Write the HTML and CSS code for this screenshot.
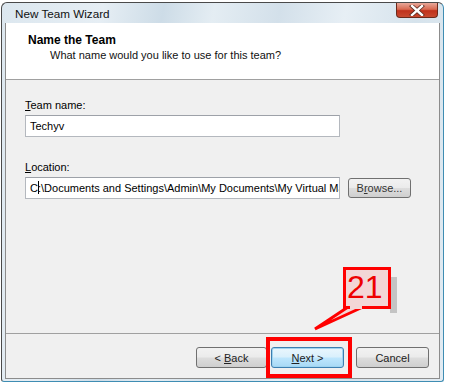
FILE: index.html
```html
<!DOCTYPE html>
<html lang="en">
<head>
    <meta charset="UTF-8">
    <title>New Team Wizard</title>
    <link rel="stylesheet" href="styles.css">
</head>
<body>

    <div class="window">
        <div class="titlebar">
            <span class="title">New Team Wizard</span>
            <div class="close-btn">
                <svg width="16" height="11" viewBox="0 0 16 11">
                    <path d="M3 1 L13 10 M13 1 L3 10" stroke="#5a2a20" stroke-width="4" stroke-linecap="square"/>
                    <path d="M3 1 L13 10 M13 1 L3 10" stroke="#ffffff" stroke-width="2.4" stroke-linecap="square"/>
                </svg>
            </div>
        </div>

        <div class="client">
            <div class="header">
                <div class="header-title">Name the Team</div>
                <div class="header-sub">What name would you like to use for this team?</div>
            </div>

            <div class="content">
                <label class="field-label"><u>T</u>eam name:</label>
                <div class="textbox">Techyv</div>

                <label class="field-label location-label"><u>L</u>ocation:</label>
                <div class="location-row">
                    <div class="textbox path">C<span class="caret"></span>:\Documents and Settings\Admin\My Documents\My Virtual Machines</div>
                    <button class="btn browse">B<u>r</u>owse...</button>
                </div>
            </div>

            <div class="footer">
                <button class="btn back">&lt; <u>B</u>ack</button>
                <button class="btn next"><u>N</u>ext &gt;</button>
                <button class="btn cancel">Cancel</button>
            </div>
        </div>
    </div>

    <!-- annotation drawn over the screenshot -->
    <div class="mark-next"></div>
    <svg class="callout" width="95" height="75" viewBox="0 0 95 75">
        <rect x="80" y="16" width="7" height="36" fill="#c4c4c4"/>
        <polygon points="38,46 53,46 5,68" fill="#f3d6d6" stroke="#ff0000" stroke-width="3" stroke-linejoin="miter"/>
        <rect x="34.5" y="7.5" width="45" height="39" fill="#f3d6d6" stroke="#ff0000" stroke-width="3"/>
        <rect x="40" y="44" width="12" height="4" fill="#f3d6d6"/>
        <text x="37" y="37" class="callout-num">21</text>
    </svg>

</body>
</html>
```

FILE: styles.css
```css
body {
    margin: 0;
    background: #ffffff;
    font-family: "Liberation Sans", Arial, sans-serif;
    font-size: 11px;
    color: #000;
    position: relative;
    height: 387px;
    overflow: hidden;
}
.window {
    margin: 2px 0 0 1px;
    width: 443px;
    height: 380px;
    box-sizing: border-box;
    border: 1px solid #4a4a4a;
    border-right-color: #3f8db3;
    border-bottom-color: #3f8db3;
    border-radius: 6px 6px 3px 3px;
    padding: 0 3px 2px 3px;
    display: flex;
    flex-direction: column;
    background: linear-gradient(100deg, #dce7ef 0%, #e6eef4 20%, #cddce7 32%, #e4edf3 42%, #d3e0ea 55%, #e7eff5 68%, #d6e3ec 82%, #e2ebf2 100%);
}
.titlebar {
    height: 20px;
    display: flex;
    align-items: flex-start;
    justify-content: space-between;
}
.title {
    font-size: 11.7px;
    margin: 4px 0 0 10px;
    color: #111;
}
.close-btn {
    width: 42px;
    height: 15px;
    margin-right: 2px;
    box-sizing: border-box;
    border: 1px solid #6b2a1c;
    border-top: none;
    border-radius: 0 0 4px 4px;
    background: linear-gradient(#e8a89a 0%, #d86a52 45%, #c0321c 55%, #c84a30 100%);
    display: flex;
    align-items: center;
    justify-content: center;
}
.client {
    flex: 1;
    display: flex;
    flex-direction: column;
    border: 1px solid #8c8c8c;
    border-top: none;
    background: #f0f0f0;
}
.header {
    height: 57px;
    background: #ffffff;
    border-bottom: 1px solid #a0a0a0;
    padding: 10px 0 0 22px;
    box-sizing: border-box;
}
.header-title {
    font-weight: bold;
    font-size: 12px;
    line-height: 15px;
}
.header-sub {
    padding-left: 22px;
    line-height: 15px;
    color: #111;
}
.content {
    flex: 1;
    padding: 18px 0 0 19px;
    display: flex;
    flex-direction: column;
}
.field-label {
    line-height: 15px;
    margin-bottom: 2px;
}
.location-label {
    margin-top: 23px;
}
.textbox {
    width: 315px;
    height: 22px;
    box-sizing: border-box;
    border: 1px solid #b4b8be;
    border-top-color: #9da1a8;
    background: #fff;
    padding: 0 4px;
    line-height: 20px;
    white-space: nowrap;
    overflow: hidden;
}
.path {
    height: 22px;
}
.caret {
    display: inline-block;
    width: 1px;
    height: 13px;
    background: #000;
    vertical-align: -2px;
    margin: 0 -1px 0 0;
}
.location-row {
    display: flex;
    align-items: flex-start;
}
.btn {
    font-family: "Liberation Sans", Arial, sans-serif;
    font-size: 11px;
    color: #222;
    height: 21px;
    box-sizing: border-box;
    border: 1px solid #707070;
    border-radius: 3px;
    background: linear-gradient(#f2f2f2 0%, #ebebeb 48%, #dddddd 52%, #cfcfcf 100%);
    padding: 0;
}
.browse {
    width: 63px;
    height: 20px;
    margin: 1px 0 0 8px;
    color: #333;
}
.footer {
    height: 45px;
    border-top: 1px solid #a0a0a0;
    display: flex;
    justify-content: flex-end;
    align-items: flex-start;
    padding: 13px 10px 0 0;
    box-sizing: border-box;
}
.back {
    width: 71px;
}
.next {
    width: 73px;
    margin-left: 4px;
    border-color: #3c7fb1;
    background: linear-gradient(#eaf6fd 0%, #d9f0fc 48%, #bee6fd 52%, #a7d9f5 100%);
    box-shadow: inset 0 0 0 1px #9fd4f0;
}
.cancel {
    width: 73px;
    margin-left: 12px;
}
.mark-next {
    position: absolute;
    left: 266px;
    top: 337px;
    width: 86px;
    height: 41px;
    box-sizing: border-box;
    border: 4px solid #ff0000;
}
.callout {
    position: absolute;
    left: 310px;
    top: 261px;
}
.callout-num {
    font-family: "Liberation Sans", Arial, sans-serif;
    font-size: 32px;
    fill: #ee0000;
}
```
